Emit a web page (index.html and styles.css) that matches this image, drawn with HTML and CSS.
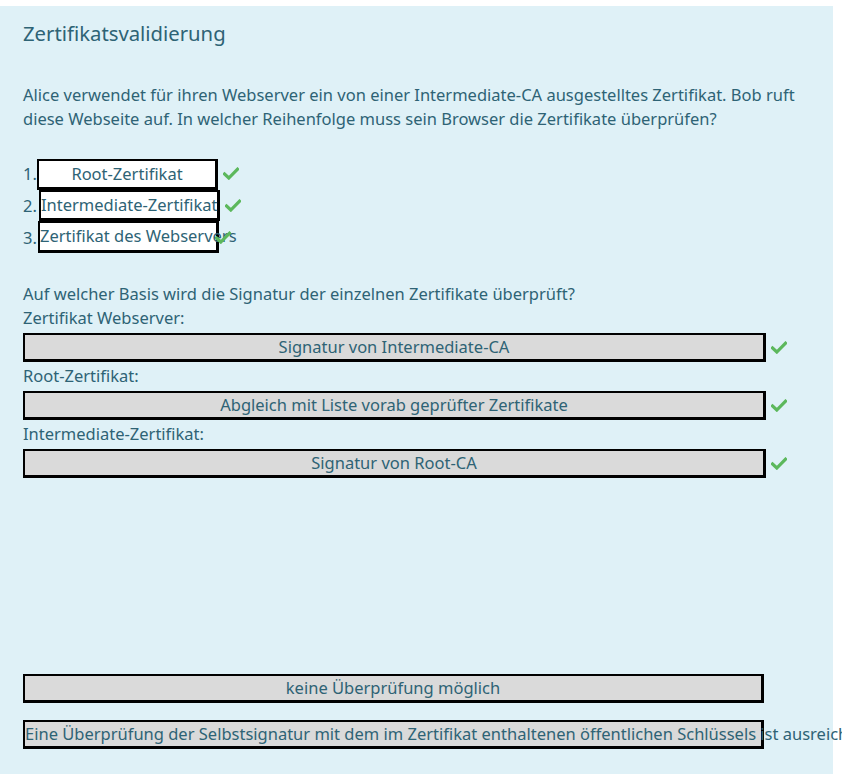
FILE: index.html
```html
<!DOCTYPE html>
<html lang="de">
<head>
<meta charset="utf-8">
<title>Zertifikatsvalidierung</title>
<link rel="stylesheet" href="styles.css">
</head>
<body>
<div class="panel">
  <h3 class="title">Zertifikatsvalidierung</h3>
  <p class="intro">Alice verwendet für ihren Webserver ein von einer Intermediate-CA ausgestelltes Zertifikat. Bob ruft diese Webseite auf. In welcher Reihenfolge muss sein Browser die Zertifikate überprüfen?</p>

  <ol class="order">
    <li class="order-item"><span class="num">1.</span><span class="slot slot-a">Root-Zertifikat</span><svg class="check" viewBox="0 0 16 13"><path d="M1.5 7 L5.8 11 L14.5 2.2" /></svg></li>
    <li class="order-item"><span class="num">2.</span><span class="slot slot-b">Intermediate-Zertifikat</span><svg class="check" viewBox="0 0 16 13"><path d="M1.5 7 L5.8 11 L14.5 2.2" /></svg></li>
    <li class="order-item"><span class="num">3.</span><span class="slot slot-c">Zertifikat des Webservers</span><svg class="check check-over" viewBox="0 0 16 13"><path d="M1.5 7 L5.8 11 L14.5 2.2" /></svg></li>
  </ol>

  <p class="question">Auf welcher Basis wird die Signatur der einzelnen Zertifikate überprüft?</p>
  <div class="match">
    <div class="label">Zertifikat Webserver:</div>
    <div class="match-row"><div class="drop">Signatur von Intermediate-CA</div><svg class="check" viewBox="0 0 16 13"><path d="M1.5 7 L5.8 11 L14.5 2.2" /></svg></div>
    <div class="label">Root-Zertifikat:</div>
    <div class="match-row"><div class="drop">Abgleich mit Liste vorab geprüfter Zertifikate</div><svg class="check" viewBox="0 0 16 13"><path d="M1.5 7 L5.8 11 L14.5 2.2" /></svg></div>
    <div class="label">Intermediate-Zertifikat:</div>
    <div class="match-row"><div class="drop">Signatur von Root-CA</div><svg class="check" viewBox="0 0 16 13"><path d="M1.5 7 L5.8 11 L14.5 2.2" /></svg></div>
  </div>

  <div class="pool">
    <div class="option">keine Überprüfung möglich</div>
    <div class="option">Eine Überprüfung der Selbstsignatur mit dem im Zertifikat enthaltenen öffentlichen Schlüssels ist ausreichend</div>
  </div>
</div>
</body>
</html>
```
FILE: styles.css
```css
html, body {
  margin: 0;
  padding: 0;
  background: #ffffff;
  overflow: hidden;
}

body {
  font-family: "Noto Sans", "Open Sans", sans-serif;
  font-size: 16.5px;
  color: #2e6375;
}

.panel {
  margin-top: 6px;
  width: 810px;
  min-height: 780px;
  padding: 13px 0 0 23px;
  background: #dff1f7;
}

.title {
  margin: 0;
  font-size: 20.3px;
  font-weight: 400;
  line-height: 28px;
}

.intro {
  margin: 36px 0 0;
  width: 790px;
  line-height: 24px;
}

.order {
  list-style: none;
  margin: 26px 0 0;
  padding: 0;
}

.order-item {
  display: flex;
  align-items: center;
  height: 32px;
  white-space: nowrap;
}

.num {
  width: 14px;
  flex: none;
}

.order-item:first-child .num {
  width: 11px;
}

.slot {
  box-sizing: border-box;
  display: block;
  width: 181px;
  height: 31px;
  margin-left: 3px;
  border: 2px solid #000;
  border-right-width: 3px;
  border-bottom-width: 3px;
  background: #ffffff;
  text-align: center;
  line-height: 26px;
  white-space: nowrap;
}

.slot-a {
  margin-top: 2px;
}

.slot-b {
  margin-top: 1px;
  margin-left: 2px;
}

.slot-c {
  margin-left: 1px;
  height: 32px;
  background: #fff;
}

.check {
  flex: none;
  width: 16px;
  height: 13px;
  margin-left: 5px;
  fill: none;
  stroke: #5cb85c;
  stroke-width: 3.2;
  stroke-linecap: square;
}

.check-over {
  position: relative;
  left: -9px;
}

.question {
  margin: 29px 0 0;
  line-height: 24px;
}

.label {
  line-height: 24px;
}

.match-row {
  display: flex;
  align-items: center;
  margin: 3px 0 2px;
}

.drop {
  box-sizing: border-box;
  width: 743px;
  height: 29px;
  border: 2px solid #000;
  border-right-width: 3px;
  border-bottom-width: 3px;
  background: #dadada;
  text-align: center;
  line-height: 24px;
  white-space: nowrap;
}

.match-row .check {
  margin-left: 5px;
}

.pool {
  margin-top: 196px;
  display: flex;
  flex-direction: column;
  gap: 17px;
}

.option {
  box-sizing: border-box;
  width: 741px;
  height: 29px;
  border: 2px solid #000;
  border-right-width: 3px;
  border-bottom-width: 3px;
  background: #dadada;
  text-align: center;
  line-height: 24px;
  white-space: nowrap;
}
```
